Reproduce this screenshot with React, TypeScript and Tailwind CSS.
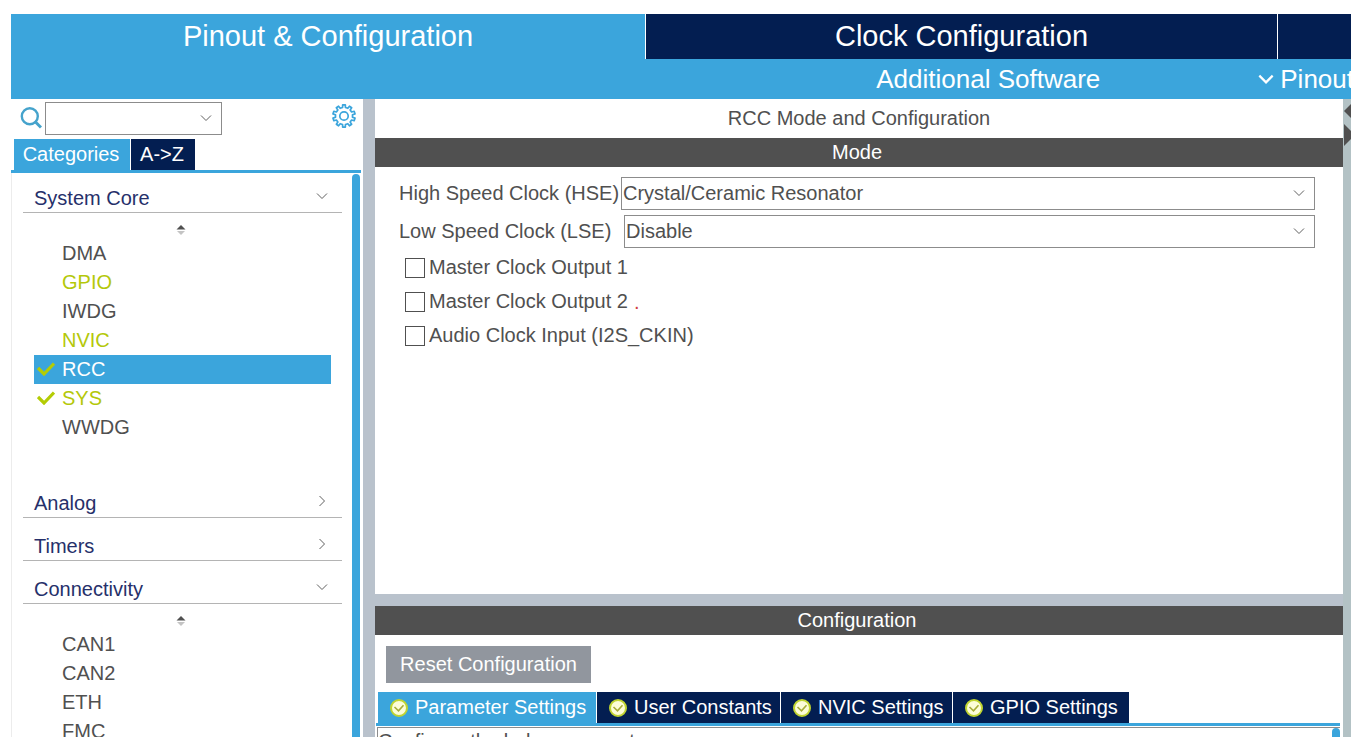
import React from 'react';

function Chevron({ dir, className }: { dir: 'down' | 'right'; className: string }) {
  return (
    <svg viewBox="0 0 12 12" className={className} fill="none" stroke="currentColor" aria-hidden="true">
      <path d={dir === 'down' ? 'M1 3.5 L6 8.5 L11 3.5' : 'M3.5 1 L8.5 6 L3.5 11'} />
    </svg>
  );
}

function gearPath(teeth: number, outer: number, inner: number) {
  const step = (Math.PI * 2) / teeth;
  const point = (r: number, a: number) => `${(12 + r * Math.sin(a)).toFixed(2)} ${(12 - r * Math.cos(a)).toFixed(2)}`;
  const parts: string[] = [];
  for (let i = 0; i < teeth; i++) {
    const a = i * step;
    parts.push(point(inner, a - step * 0.27), point(outer, a - step * 0.19), point(outer, a + step * 0.19), point(inner, a + step * 0.27));
  }
  return `M${parts.join(' L')} Z`;
}

function Gear() {
  return (
    <svg viewBox="0 0 24 24" className="size-6" fill="none" stroke="currentColor" strokeWidth="1.7" strokeLinejoin="round" aria-hidden="true">
      <path d={gearPath(10, 11.2, 8.6)} />
      <circle cx="12" cy="12" r="4.2" />
    </svg>
  );
}

function SearchIcon() {
  return (
    <svg viewBox="0 0 22 22" className="size-[22px] shrink-0 text-[#45a3cc]" fill="none" stroke="currentColor" strokeWidth="2.4" aria-hidden="true">
      <circle cx="9.8" cy="9.2" r="8" />
      <path d="M15 14.5 L21 20.5" strokeWidth="3" />
    </svg>
  );
}

function Tick() {
  return (
    <svg viewBox="0 0 18 14" className="h-[14px] w-[18px]" fill="none" stroke="#b4cc04" strokeWidth="3.2" aria-hidden="true">
      <path d="M1 6 L7 12 L17 1.5" />
    </svg>
  );
}

function StatusBadge() {
  return (
    <svg viewBox="0 0 20 20" className="size-5 shrink-0" aria-hidden="true">
      <circle cx="10" cy="10" r="8" fill="#fdfdd8" stroke="#c0d430" strokeWidth="2" />
      <path d="M5.5 9 L9.5 12.8 L14.5 7.2" fill="none" stroke="#a8ac38" strokeWidth="1.6" />
    </svg>
  );
}

function SortArrows() {
  return (
    <div className="flex h-[26px] items-end justify-center pr-[3px] pb-1">
      <svg viewBox="0 0 10 10" className="size-[10px]" aria-hidden="true">
        <path d="M0.5 4.4 L5 0 L9.5 4.4 Z" fill="#505050" />
        <path d="M1 6 L5 10 L9 6 Z" fill="#c4c4c4" />
      </svg>
    </div>
  );
}

type Item = { name: string; active?: boolean; checked?: boolean; selected?: boolean };

const core: Item[] = [
  { name: 'DMA' },
  { name: 'GPIO', active: true },
  { name: 'IWDG' },
  { name: 'NVIC', active: true },
  { name: 'RCC', active: true, checked: true, selected: true },
  { name: 'SYS', active: true, checked: true },
  { name: 'WWDG' },
];
const connectivity: Item[] = [{ name: 'CAN1' }, { name: 'CAN2' }, { name: 'ETH' }, { name: 'FMC' }];

function Group({ title, items }: { title: string; items?: Item[] }) {
  return (
    <section className="shrink-0">
      <button className="flex h-[43px] w-full items-end justify-between border-b border-[#b4b4b4] pr-[14px] pl-[11px] text-left text-[#26306a]">
        <span className="h-[26px] leading-6">{title}</span>
        <Chevron dir={items ? 'down' : 'right'} className="mb-[10px] size-3 text-[#606060]" />
      </button>
      {items && (
        <div className="pb-[33px]">
          <SortArrows />
          <ul className="mr-[11px] ml-[11px]">
            {items.map((item) => (
              <li key={item.name}>
                <button
                  className={`flex h-[29px] w-full items-center pb-[2px] text-left ${
                    item.selected ? 'bg-[#3ba5dc] text-white' : item.active ? 'text-[#b4c80a]' : 'text-[#505050]'
                  }`}
                >
                  <span className="w-7 pl-[3px]">{item.checked && <Tick />}</span>
                  {item.name}
                </button>
              </li>
            ))}
          </ul>
        </div>
      )}
    </section>
  );
}

function Sidebar() {
  return (
    <aside className="flex w-[352px] shrink-0 flex-col">
      <div className="flex h-10 shrink-0 items-center pr-[7px] pb-[2px] pl-[9px]">
        <SearchIcon />
        <div className="relative ml-[3px] h-[33px] w-[177px]">
          <select aria-label="Search" className="size-full appearance-none rounded-none border border-[#8c8c8c] bg-white px-1">
            <option value="" />
          </select>
          <Chevron dir="down" className="pointer-events-none absolute top-[10px] right-[10px] size-3 text-[#606060]" />
        </div>
        <button aria-label="Settings" className="mb-1 ml-auto text-[#3ba5dc]">
          <Gear />
        </button>
      </div>
      <div className="mr-[2px] flex h-[34px] shrink-0 gap-px border-b-[3px] border-[#3ba5dc] pl-[3px] text-white">
        <button className="w-[116px] bg-[#3ba5dc] pr-[2px] pb-[2px]">Categories</button>
        <button className="w-16 bg-[#031e51] pr-[2px] pb-[2px]">A-&gt;Z</button>
      </div>
      <div className="flex min-h-0 flex-1 border-l border-[#ececec]">
        <nav className="-mt-[3px] mr-[10px] ml-[11px] flex min-w-0 flex-1 flex-col overflow-hidden">
          <Group title="System Core" items={core} />
          <Group title="Analog" />
          <Group title="Timers" />
          <Group title="Connectivity" items={connectivity} />
        </nav>
        <div className="mt-px mr-[3px] w-2 rounded-t bg-[#3ba5dc]" />
      </div>
    </aside>
  );
}

function ClockSelect({ id, label, labelWidth, options }: { id: string; label: string; labelWidth: string; options: string[] }) {
  return (
    <div className="flex h-[33px] items-center">
      <label htmlFor={id} className={`shrink-0 pb-[2px] whitespace-nowrap ${labelWidth}`}>
        {label}
      </label>
      <div className="relative h-full min-w-0 flex-1">
        <select id={id} className="size-full appearance-none rounded-none border border-[#8c8c8c] bg-white pb-[2px] pl-px">
          {options.map((option) => (
            <option key={option}>{option}</option>
          ))}
        </select>
        <Chevron dir="down" className="pointer-events-none absolute top-[10px] right-[10px] size-3 text-[#606060]" />
      </div>
    </div>
  );
}

function ClockCheck({ label, marker }: { label: string; marker?: boolean }) {
  return (
    <div className="flex h-[34px] items-center gap-[6px]">
      <label className="flex items-center gap-1">
        <input type="checkbox" className="size-5 appearance-none border border-[#505050] bg-white checked:bg-[#3ba5dc]" />
        <span className="pb-[2px]">{label}</span>
      </label>
      {marker && <span className="text-[#d04040]">.</span>}
    </div>
  );
}

function PanelHeading({ children }: { children: React.ReactNode }) {
  return <h2 className="h-[29px] shrink-0 bg-[#505050] pr-1 text-center leading-7 text-white">{children}</h2>;
}

function ModePanel() {
  return (
    <section className="flex min-h-0 flex-[495] flex-col bg-white">
      <h1 className="h-[39px] shrink-0 text-center leading-[38px]">RCC Mode and Configuration</h1>
      <PanelHeading>Mode</PanelHeading>
      <div className="flex flex-col gap-[5px] pt-[10px] pr-7 pl-6">
        <ClockSelect
          id="hse"
          label="High Speed Clock (HSE)"
          labelWidth="w-[222px]"
          options={['Crystal/Ceramic Resonator', 'BYPASS Clock Source', 'Disable']}
        />
        <ClockSelect
          id="lse"
          label="Low Speed Clock (LSE)"
          labelWidth="w-[225px]"
          options={['Disable', 'BYPASS Clock Source', 'Crystal/Ceramic Resonator']}
        />
      </div>
      <div className="pt-[3px] pl-[30px]">
        <ClockCheck label="Master Clock Output 1" />
        <ClockCheck label="Master Clock Output 2" marker />
        <ClockCheck label="Audio Clock Input (I2S_CKIN)" />
      </div>
    </section>
  );
}

const settingTabs = [
  { name: 'Parameter Settings', width: 'w-[218px]', color: 'bg-[#3ba5dc]' },
  { name: 'User Constants', width: 'w-[183px]', color: 'bg-[#031e51]' },
  { name: 'NVIC Settings', width: 'w-[171px]', color: 'bg-[#031e51]' },
  { name: 'GPIO Settings', width: 'w-[176px]', color: 'bg-[#031e51]' },
];

function ConfigurationPanel() {
  return (
    <section className="flex min-h-0 flex-[131] flex-col overflow-hidden bg-white">
      <PanelHeading>Configuration</PanelHeading>
      <div className="shrink-0 px-[11px] pt-[11px] pb-[9px]">
        <button className="block h-[37px] w-[205px] bg-[#91969e] pb-[2px] text-white">Reset Configuration</button>
      </div>
      <div className="mr-[3px] ml-px flex h-[34px] shrink-0 gap-px border-b-[3px] border-[#3ba5dc] pl-[2px] text-white">
        {settingTabs.map((tab) => (
          <button key={tab.name} className={`flex items-center gap-[6px] whitespace-nowrap pl-[11px] ${tab.width} ${tab.color}`}>
            <StatusBadge />
            <span className="pb-[2px]">{tab.name}</span>
          </button>
        ))}
      </div>
      <div className="mt-px mr-[3px] ml-[2px] flex h-10 shrink-0 border-t border-l border-[#8c8c8c]">
        <p className="flex-1 pt-px leading-6">Configure the below parameters :</p>
        <div className="w-2 rounded-t bg-[#3ba5dc]" />
      </div>
    </section>
  );
}

export default function App() {
  return (
    <div className="flex h-screen flex-col overflow-hidden bg-white pt-[14px] pl-[11px] font-['Liberation_Sans',Arial,sans-serif] text-[20px] leading-6 text-[#505050]">
      <header className="shrink-0 overflow-hidden bg-[#3ba5dc] text-white">
        <div className="grid h-[45px] grid-cols-[634fr_631fr_73fr] gap-x-px text-[29px]">
          <button className="bg-[#3ba5dc] pb-[2px]">Pinout &amp; Configuration</button>
          <button className="bg-[#031e51] pb-[2px] shadow-[-1px_0_0_#ffffff]">Clock Configuration</button>
          <button aria-label="Project Manager" className="bg-[#031e51] shadow-[-1px_0_0_#ffffff]" />
        </div>
        <div className="-mr-[3px] flex h-10 items-center justify-end text-[26px]">
          <button className="mr-[158px]">Additional Software</button>
          <button className="flex items-center gap-[6px]">
            <Chevron dir="down" className="size-4 stroke-[1.7]" />
            Pinout
          </button>
        </div>
      </header>
      <div className="flex min-h-0 flex-1">
        <Sidebar />
        <div className="w-3 shrink-0 bg-[#b9c2cc]" />
        <main className="flex min-w-0 flex-1 flex-col gap-3 bg-[#b9c2cc]">
          <ModePanel />
          <ConfigurationPanel />
        </main>
        <div className="w-2 shrink-0 overflow-hidden bg-[#b3c2c5]">
          <svg viewBox="0 0 8 50" className="h-[50px] w-2" aria-hidden="true">
            <path d="M1 12 L8 5 V19 Z" fill="#505050" />
            <path d="M1 25 L8 32 V40 L1 47 Z" fill="#505050" />
          </svg>
        </div>
      </div>
    </div>
  );
}
